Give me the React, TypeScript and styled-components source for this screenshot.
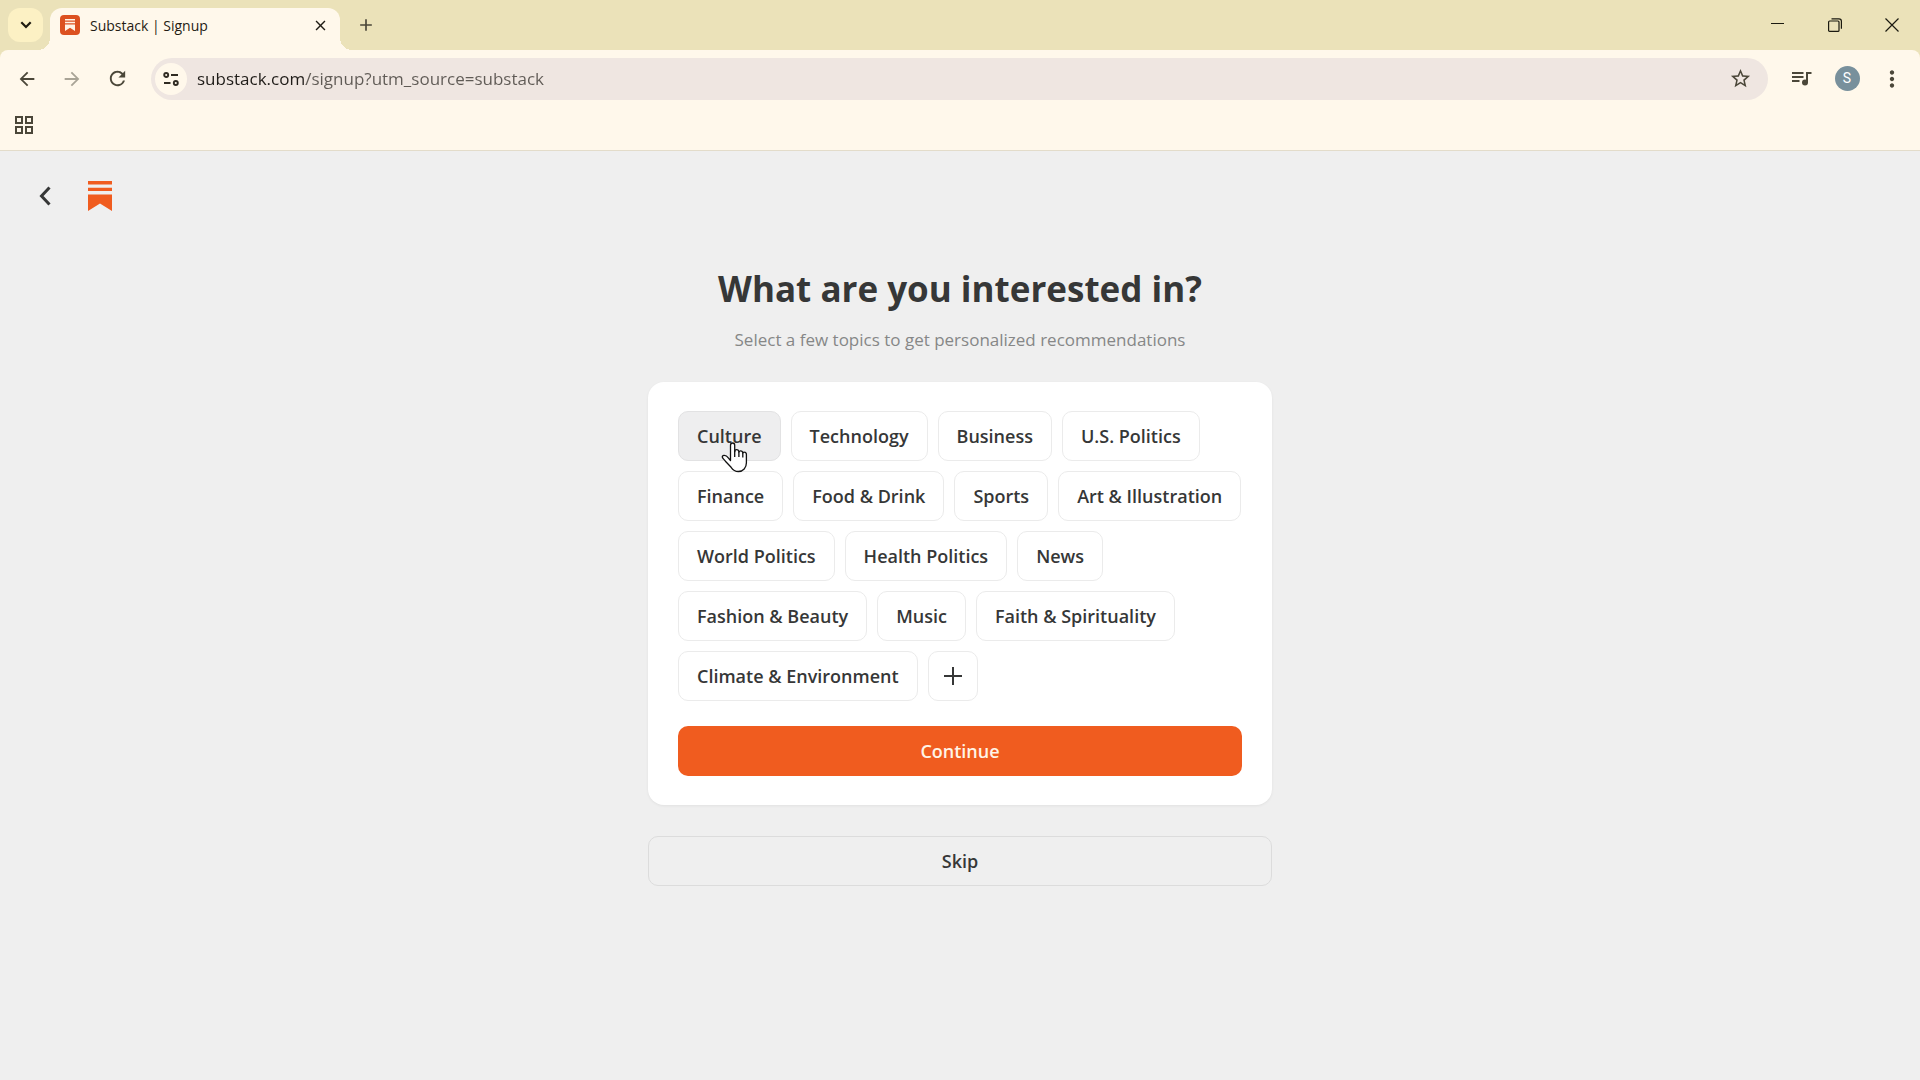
import React from "react";
import styled, { createGlobalStyle } from "styled-components";
import {
  MdAdd,
  MdArrowBack,
  MdArrowForward,
  MdClose,
  MdMoreVert,
  MdOutlineGridView,
  MdRefresh,
  MdStarBorder,
} from "react-icons/md";

const GlobalStyle = createGlobalStyle`
  * { box-sizing: border-box; }
  body {
    margin: 0;
    background: #efefef;
    color: #363737;
    font-family: "Open Sans", "Noto Sans", sans-serif;
  }
  button, input { font-family: inherit; }
`;

const Window = styled.div`
  min-height: 100vh;
  display: flex;
  flex-direction: column;
`;

const TabStrip = styled.div`
  display: flex;
  align-items: center;
  height: 50px;
  padding-left: 8px;
  background: #ebe2b9;
  color: #3a3520;
`;

const TabSearch = styled.button`
  display: grid;
  place-items: center;
  width: 35px;
  height: 34px;
  padding: 0;
  border: 0;
  border-radius: 12px;
  background: #fcf1c4;
  color: #1e1b10;
`;

const Tab = styled.div`
  position: relative;
  display: flex;
  align-items: center;
  align-self: flex-end;
  gap: 10px;
  width: 290px;
  height: 42px;
  margin-left: 7px;
  padding: 0 8px 8px 10px;
  border-radius: 12px 12px 0 0;
  background: #fff8eb;

  &::before,
  &::after {
    content: "";
    position: absolute;
    bottom: 0;
    width: 12px;
    height: 12px;
  }
  &::before {
    right: 100%;
    background: radial-gradient(circle at 0 0, transparent 12px, #fff8eb 12px);
  }
  &::after {
    left: 100%;
    background: radial-gradient(circle at 100% 0, transparent 12px, #fff8eb 12px);
  }
`;

const TabTitle = styled.span`
  flex: 1;
  padding-top: 1px;
  font-size: 14px;
  line-height: 20px;
  color: #1f1c14;
`;

const IconButton = styled.button<{ $size?: number; $color?: string }>`
  display: grid;
  place-items: center;
  width: ${(p) => p.$size ?? 36}px;
  height: ${(p) => p.$size ?? 36}px;
  padding: 0;
  border: 0;
  border-radius: 50%;
  background: transparent;
  color: ${(p) => p.$color ?? "#4b4739"};
`;

const NewTab = styled(IconButton)`
  margin-left: 8px;
`;

const WindowControls = styled.div`
  display: flex;
  height: 100%;
  margin-left: auto;
`;

const WindowControl = styled.button`
  display: grid;
  place-items: center;
  width: 57px;
  padding: 0;
  border: 0;
  background: transparent;
  color: #1b1a10;
`;

const ToolbarBack = styled.div`
  background: #ebe2b9;
`;

const Toolbar = styled.div`
  display: flex;
  align-items: center;
  gap: 16px;
  height: 57px;
  padding: 0 10px 0 9px;
  border-radius: 8px 8px 0 0;
  background: #fff8eb;
`;

const ToolGroup = styled.div`
  display: flex;
  align-items: center;
  gap: 9px;
`;

const AddressBar = styled.div`
  flex: 1;
  display: flex;
  align-items: center;
  gap: 10px;
  height: 42px;
  padding: 0 10px 0 4px;
  border-radius: 21px;
  background: #efe6e1;
`;

const SiteInfo = styled(IconButton)`
  background: #fff8eb;
`;

const AddressInput = styled.input`
  flex: 1;
  min-width: 0;
  height: 30px;
  padding: 0;
  border: 0;
  outline: 0;
  font-size: 17px;
  color: #5f5a55;
  background: linear-gradient(90deg, #1f1c18 109px, #5f5a55 109px);
  background-clip: text;
  -webkit-background-clip: text;
  -webkit-text-fill-color: transparent;
`;

const Avatar = styled.span`
  display: grid;
  place-items: center;
  width: 25px;
  height: 25px;
  border-radius: 50%;
  background: #78909c;
  color: #fff;
  font-family: Roboto, sans-serif;
  font-size: 14px;
  line-height: 25px;
`;

const BookmarkBar = styled.div`
  display: flex;
  height: 44px;
  padding: 0 6px 8px;
  border-bottom: 1px solid #e3dcca;
  background: #fff8eb;
`;

const Page = styled.div`
  flex: 1;
  display: flex;
  flex-direction: column;
`;

const PageHeader = styled.header`
  display: flex;
  align-items: center;
  height: 90px;
  padding: 0 20px;
`;

const BackButton = styled(IconButton)`
  border-radius: 8px;
`;

const LogoLink = styled.a`
  display: grid;
  place-items: center;
  width: 60px;
  height: 50px;
`;

const Content = styled.main`
  display: flex;
  flex-direction: column;
  align-items: center;
  width: 100%;
  max-width: 624px;
  margin: 0 auto;
  padding-top: 22px;
`;

const Title = styled.h1`
  margin: 0;
  font-size: 35px;
  line-height: 52px;
  font-weight: 700;
`;

const Subtitle = styled.p`
  margin: 12px 0 0;
  font-size: 17px;
  line-height: 25px;
  color: #868787;
`;

const Card = styled.section`
  width: 100%;
  margin-top: 30px;
  padding: 29px 30px;
  border-radius: 16px;
  background: #fff;
  box-shadow: 0 1px 3px rgba(0, 0, 0, 0.06);
`;

const Topics = styled.ul`
  display: flex;
  flex-wrap: wrap;
  gap: 10px;
  margin: 0;
  padding: 0;
  list-style: none;
`;

const TopicItem = styled.li`
  position: relative;
`;

const Chip = styled.button<{ $hovered?: boolean; $square?: boolean }>`
  display: grid;
  place-items: center;
  height: 50px;
  width: ${(p) => (p.$square ? "50px" : "auto")};
  padding: ${(p) => (p.$square ? "0" : "0 18px")};
  border: 1px solid ${(p) => (p.$hovered ? "#e2e2e3" : "#ebebeb")};
  border-radius: 10px;
  background: ${(p) => (p.$hovered ? "#eeeeef" : "#fff")};
  color: #363737;
  font-size: 18px;
  line-height: 24px;
  font-weight: 600;
  white-space: nowrap;
`;

const Pointer = styled.svg`
  position: absolute;
  left: 43px;
  top: 31px;
  z-index: 1;
  pointer-events: none;
`;

const WideButton = styled.button<{ $primary?: boolean }>`
  width: 100%;
  height: 50px;
  margin-top: ${(p) => (p.$primary ? 25 : 31)}px;
  padding: 0;
  border: ${(p) => (p.$primary ? "0" : "1px solid #dcdcdc")};
  border-radius: 10px;
  background: ${(p) => (p.$primary ? "#f05c1f" : "transparent")};
  color: ${(p) => (p.$primary ? "#fff4e6" : "#363737")};
  font-size: 18px;
  line-height: 24px;
  font-weight: 600;
`;

const topics = [
  "Culture",
  "Technology",
  "Business",
  "U.S. Politics",
  "Finance",
  "Food & Drink",
  "Sports",
  "Art & Illustration",
  "World Politics",
  "Health Politics",
  "News",
  "Fashion & Beauty",
  "Music",
  "Faith & Spirituality",
  "Climate & Environment",
];

const Favicon = () => (
  <svg width="20" height="20" viewBox="0 0 20 20" aria-hidden="true">
    <rect width="20" height="20" rx="4" fill="#dc5120" />
    <path d="M5 4h10v1.5H5zM5 6.8h10v1.5H5zM5 9.6h10V16l-5-3.2L5 16z" fill="#fff3e6" />
  </svg>
);

const QueueIcon = () => (
  <svg width="20" height="16" viewBox="0 0 20 16" fill="none" stroke="currentColor" strokeWidth="2">
    <path d="M0 2h11.500M0 6h11.500M0 10h7.500" />
    <circle cx="13" cy="11.500" r="3" fill="currentColor" stroke="none" />
    <path d="M15 11.500V2h4.500" />
  </svg>
);

const SubstackMark = () => (
  <svg width="24" height="30" viewBox="0 0 24 30" aria-hidden="true">
    <path d="M0 0h24v3.4H0zM0 6.7h24v3.4H0zM0 13.4h24V30l-12-7.6L0 30z" fill="#f05c1f" />
  </svg>
);

const HandPointer = () => (
  <Pointer width="27" height="34" viewBox="0 0 27 34" aria-hidden="true">
    <path
      d="M9.5 18.500V3.200C9.5 1.900 10.300 1 11.600 1s2.100.9 2.100 2.200V9.500c.3-1.300 1.200-1.900 2.200-1.800 1.200.1 1.900.9 2 2.300.4-.9 1.100-1.300 2-1.200 1.100.1 1.800.9 1.900 2.200.4-.7 1-1 1.700-.9 1.200.1 1.900 1.100 1.900 2.500v8.200c0 5-3.200 8.700-8 8.700-3.200 0-5.500-1.500-7.300-4.200L4.400 19.200c-1-1.500-2.200-2.300-2.900-3.500-.6-1.100.1-2.200 1.500-2.300 1.700-.1 3.200.9 4.300 2.500z"
      fill="#fff"
      stroke="#111"
      strokeWidth="1.300"
      strokeLinejoin="round"
    />
    <path d="M13.700 9v6M17.900 10v5M21.800 11v4.500" stroke="#111" strokeWidth="1.300" fill="none" />
  </Pointer>
);

export default function App() {
  return (
    <Window>
      <GlobalStyle />
      <TabStrip>
        <TabSearch aria-label="Search tabs">
          <svg width="12" height="8" viewBox="0 0 12 8" fill="none" stroke="currentColor" strokeWidth="2.2">
            <path d="M1.300 1.300 6 6l4.700-4.700" />
          </svg>
        </TabSearch>
        <Tab>
          <Favicon />
          <TabTitle>Substack | Signup</TabTitle>
          <IconButton $size={24} $color="#1f1c14" aria-label="Close tab">
            <MdClose size={17} />
          </IconButton>
        </Tab>
        <NewTab aria-label="New tab">
          <MdAdd size={20} />
        </NewTab>
        <WindowControls>
          <WindowControl aria-label="Minimize">
            <svg width="14" height="14" viewBox="0 0 14 14" stroke="currentColor">
              <path d="M0 5.500h13" />
            </svg>
          </WindowControl>
          <WindowControl aria-label="Restore">
            <svg width="14" height="14" viewBox="0 0 14 14" fill="none" stroke="currentColor" strokeWidth="1.200">
              <rect x=".6" y="3" width="10.400" height="10.400" rx="1" />
              <path d="M3.500.8h7.500a2.400 2.400 0 0 1 2.400 2.400v7.600" />
            </svg>
          </WindowControl>
          <WindowControl aria-label="Close">
            <svg width="14" height="14" viewBox="0 0 14 14" stroke="currentColor" strokeWidth="1.200">
              <path d="m.5.5 13 13M13.500.5l-13 13" />
            </svg>
          </WindowControl>
        </WindowControls>
      </TabStrip>

      <ToolbarBack>
        <Toolbar>
          <ToolGroup>
            <IconButton aria-label="Back">
              <MdArrowBack size={22} />
            </IconButton>
            <IconButton $color="#a9a496" aria-label="Forward">
              <MdArrowForward size={22} />
            </IconButton>
            <IconButton aria-label="Reload">
              <MdRefresh size={23} />
            </IconButton>
          </ToolGroup>
          <AddressBar>
            <SiteInfo $size={32} $color="#2f2a22" aria-label="View site information">
              <svg width="16" height="16" viewBox="0 0 16 16" fill="none" stroke="currentColor" strokeWidth="1.900">
                <circle cx="3.200" cy="4" r="2" />
                <path d="M8 4h7M1 12h6.500" />
                <circle cx="12.800" cy="12" r="2" />
              </svg>
            </SiteInfo>
            <AddressInput aria-label="Address" defaultValue="substack.com/signup?utm_source=substack" />
            <IconButton aria-label="Bookmark this page">
              <MdStarBorder size={23} />
            </IconButton>
          </AddressBar>
          <ToolGroup>
            <IconButton aria-label="Media controls">
              <QueueIcon />
            </IconButton>
            <IconButton aria-label="Profile">
              <Avatar>S</Avatar>
            </IconButton>
            <IconButton aria-label="Menu">
              <MdMoreVert size={26} />
            </IconButton>
          </ToolGroup>
        </Toolbar>
      </ToolbarBack>
      <BookmarkBar>
        <IconButton aria-label="Apps">
          <MdOutlineGridView size={24} />
        </IconButton>
      </BookmarkBar>

      <Page>
        <PageHeader>
          <BackButton $size={50} $color="#363737" aria-label="Go back">
            <svg width="12" height="20" viewBox="0 0 12 20" fill="none" stroke="currentColor" strokeWidth="3">
              <path d="M10.500 1.500 2.500 10l8 8.500" />
            </svg>
          </BackButton>
          <LogoLink href="#" aria-label="Substack">
            <SubstackMark />
          </LogoLink>
        </PageHeader>
        <Content>
          <Title>What are you interested in?</Title>
          <Subtitle>Select a few topics to get personalized recommendations</Subtitle>
          <Card>
            <Topics>
              {topics.map((topic, i) => (
                <TopicItem key={topic}>
                  <Chip $hovered={i === 0}>{topic}</Chip>
                  {i === 0 && <HandPointer />}
                </TopicItem>
              ))}
              <TopicItem>
                <Chip $square aria-label="Show more topics">
                  <svg width="18" height="18" viewBox="0 0 18 18" stroke="currentColor" strokeWidth="2">
                    <path d="M9 0v18M0 9h18" />
                  </svg>
                </Chip>
              </TopicItem>
            </Topics>
            <WideButton $primary>Continue</WideButton>
          </Card>
          <WideButton>Skip</WideButton>
        </Content>
      </Page>
    </Window>
  );
}
